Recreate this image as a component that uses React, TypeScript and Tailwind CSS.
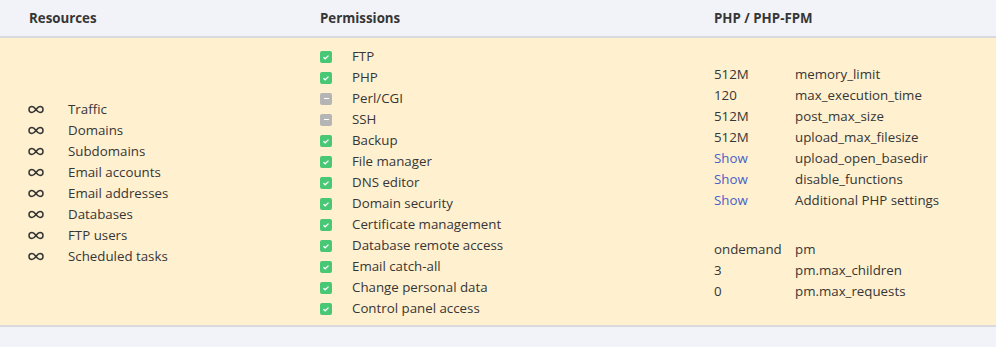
const resources = [
  "Traffic",
  "Domains",
  "Subdomains",
  "Email accounts",
  "Email addresses",
  "Databases",
  "FTP users",
  "Scheduled tasks",
];

const permissions: [string, boolean][] = [
  ["FTP", true],
  ["PHP", true],
  ["Perl/CGI", false],
  ["SSH", false],
  ["Backup", true],
  ["File manager", true],
  ["DNS editor", true],
  ["Domain security", true],
  ["Certificate management", true],
  ["Database remote access", true],
  ["Email catch-all", true],
  ["Change personal data", true],
  ["Control panel access", true],
];

const phpSettings: [string, string, boolean][] = [
  ["512M", "memory_limit", false],
  ["120", "max_execution_time", false],
  ["512M", "post_max_size", false],
  ["512M", "upload_max_filesize", false],
  ["Show", "upload_open_basedir", true],
  ["Show", "disable_functions", true],
  ["Show", "Additional PHP settings", true],
];

const fpmSettings: [string, string][] = [
  ["ondemand", "pm"],
  ["3", "pm.max_children"],
  ["0", "pm.max_requests"],
];

const CheckBox = ({ on }: { on: boolean }) => (
  <span
    className={`flex h-3 w-3 items-center justify-center rounded-[2px] ${
      on ? "bg-[#48c774]" : "bg-[#b5b5b5]"
    }`}
  >
    {on ? (
      <svg viewBox="0 0 12 12" className="h-3 w-3">
        <path d="M3.5 6.2 5.2 7.8 8.5 4.6" fill="none" stroke="#fff" strokeWidth="1.3" />
      </svg>
    ) : (
      <span className="h-px w-[5px] bg-white" />
    )}
  </span>
);

// unlimited sign
const Infinity = () => (
  <svg viewBox="0 0 16 9" className="h-[9px] w-[16px]">
    <path
      d="M8 4.5C6.6 2.6 5.5 1.5 4 1.5a3 3 0 0 0 0 6c1.5 0 2.6-1.1 4-3s2.5-3 4-3a3 3 0 0 1 0 6c-1.5 0-2.6-1.1-4-3z"
      fill="none"
      stroke="#363636"
      strokeWidth="1.5"
    />
  </svg>
);

const App = () => {
  return (
    <div className="min-h-[347px] bg-[#f2f3f8] text-[13.3px] leading-[21px] text-[#363636] [font-family:'Open_Sans',sans-serif]">
      <div className="grid grid-cols-[291px_394px_1fr] border-b-2 border-[#d9d9de] font-bold">
        <div className="px-[29px] pt-[8px] pb-[7px]">Resources</div>
        <div className="px-[29px] pt-[8px] pb-[7px]">Permissions</div>
        <div className="px-[29px] pt-[8px] pb-[7px]">PHP / PHP-FPM</div>
      </div>
      <div className="grid grid-cols-[291px_394px_1fr] border-b-2 border-[#d9d9de] bg-[#fff0cf]">
        <div className="flex flex-col justify-center px-[28px] pt-[8px] pb-[6px]">
          {resources.map((r) => (
            <div key={r} className="flex items-center">
              <span className="w-[40px]">
                <Infinity />
              </span>
              <span>{r}</span>
            </div>
          ))}
        </div>
        <div className="px-[29px] pt-[8px] pb-[6px]">
          {permissions.map(([name, on]) => (
            <div key={name} className="flex items-center">
              <span className="w-[32px]">
                <CheckBox on={on} />
              </span>
              <span>{name}</span>
            </div>
          ))}
        </div>
        <div className="flex flex-col justify-center px-[29px] pt-[8px] pb-[6px]">
          {phpSettings.map(([val, name, link]) => (
            <div key={name} className="flex">
              <span className={`w-[81px] ${link ? "text-[#485fc7]" : ""}`}>{val}</span>
              <span>{name}</span>
            </div>
          ))}
          <div className="h-[28px]" />
          {fpmSettings.map(([val, name]) => (
            <div key={name} className="flex">
              <span className="w-[81px]">{val}</span>
              <span>{name}</span>
            </div>
          ))}
        </div>
      </div>
    </div>
  );
};

export default App;
